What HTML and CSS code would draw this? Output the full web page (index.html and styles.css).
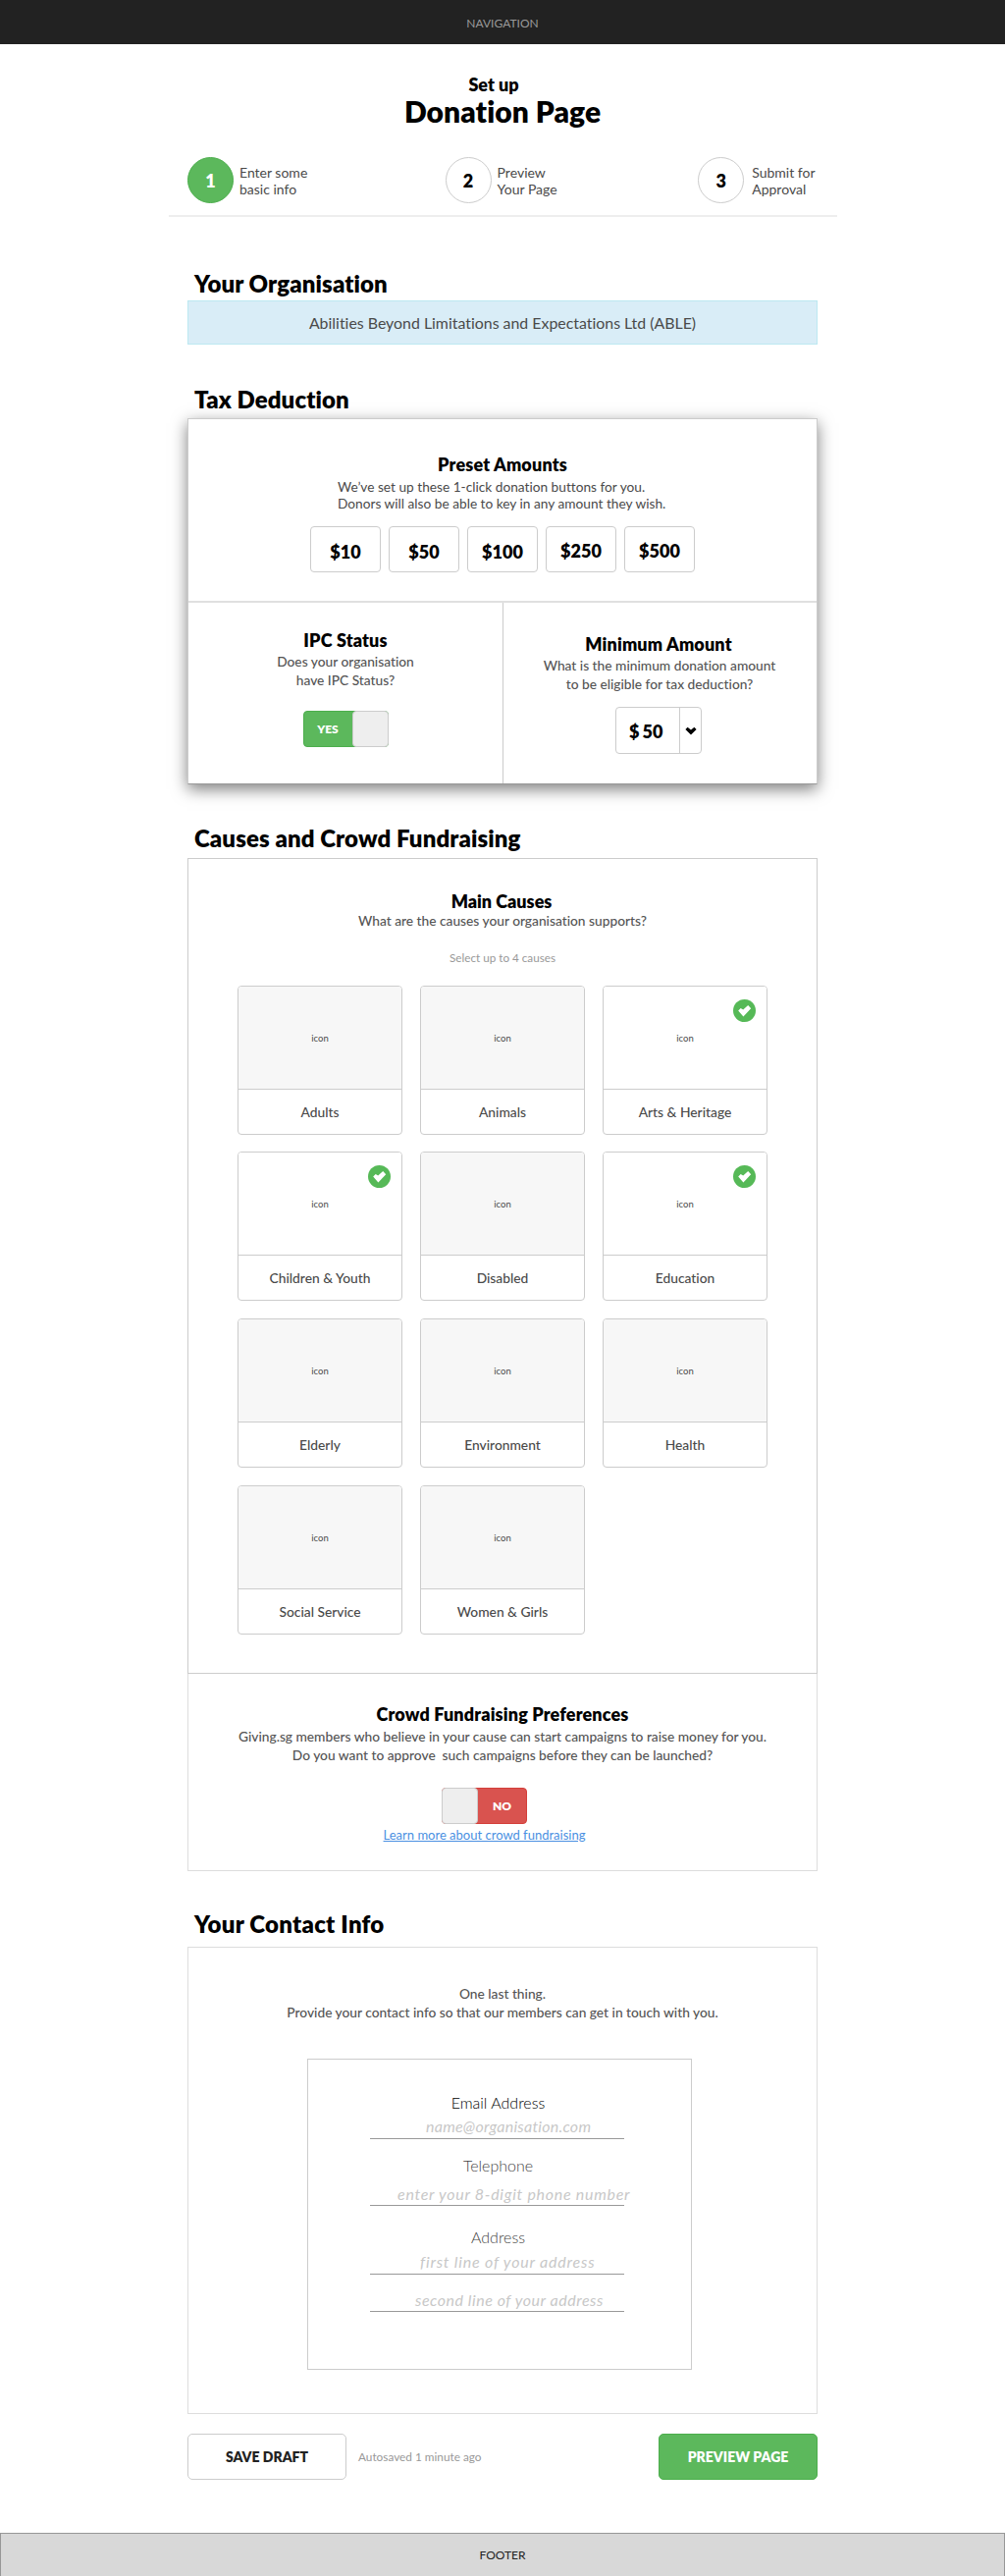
FILE: index.html
```
<!DOCTYPE html>
<html lang="en">
<head>
<meta charset="utf-8">
<title>Set up Donation Page</title>
<link rel="stylesheet" href="styles.css">
</head>
<body>
<svg class="sprite" width="0" height="0" aria-hidden="true">
  <symbol id="check" viewBox="0 0 23 23">
    <circle cx="11.5" cy="11.5" r="11.5" fill="#56b957"/>
    <path d="M5.2 11.6 7.7 9 10.2 10.6 15.2 6 18.2 9.2 10.4 17.4Z" fill="#fff"/>
  </symbol>
</svg>
<nav class="nav">NAVIGATION</nav>
<main class="page">
  <header class="title">
    <p class="title-small">Set up</p>
    <h1>Donation Page</h1>
  </header>
  <ol class="steps">
    <li class="step active"><span class="num">1</span><span>Enter some<br>basic info</span></li>
    <li class="step"><span class="num">2</span><span>Preview<br>Your Page</span></li>
    <li class="step last"><span class="num">3</span><span>Submit for<br>Approval</span></li>
  </ol>
  <hr class="rule">

  <h2 class="h-org">Your Organisation</h2>
  <div class="org">Abilities Beyond Limitations and Expectations Ltd (ABLE)</div>

  <h2 class="h-tax">Tax Deduction</h2>
  <section class="card tax">
    <div class="preset">
      <h3>Preset Amounts</h3>
      <p class="preset-text">We’ve set up these 1-click donation buttons for you.<br>Donors will also be able to key in any amount they wish.</p>
      <div class="amounts">
        <button>$10</button><button>$50</button><button>$100</button><button class="low">$250</button><button class="low">$500</button>
      </div>
    </div>
    <div class="halves">
      <div class="half ipc">
        <h3>IPC Status</h3>
        <p class="hint">Does your organisation<br>have IPC Status?</p>
        <div class="toggle yes"><span>YES</span><i></i></div>
      </div>
      <div class="half min">
        <h3>Minimum Amount</h3>
        <p class="hint">What is the minimum donation amount<br>to be eligible for tax deduction?</p>
        <div class="select"><span class="value"><b>$</b><b>50</b></span><span class="arrow"><svg width="12" height="9" viewBox="0 0 12 9"><path d="M0.4 3 2.6 0.7 6 3.4 9.4 0.7 11.6 3 6 8.4Z"/></svg></span></div>
      </div>
    </div>
  </section>

  <h2 class="h-causes">Causes and Crowd Fundraising</h2>
  <section class="card causes">
    <h3>Main Causes</h3>
    <p class="hint one">What are the causes your organisation supports?</p>
    <p class="limit">Select up to 4 causes</p>
    <div class="grid">
      <div class="cause"><div class="pic">icon</div><div class="name">Adults</div></div>
      <div class="cause"><div class="pic">icon</div><div class="name">Animals</div></div>
      <div class="cause on"><div class="pic">icon</div><div class="name">Arts &amp; Heritage</div><svg class="badge"><use href="#check"/></svg></div>
      <div class="cause on"><div class="pic">icon</div><div class="name">Children &amp; Youth</div><svg class="badge"><use href="#check"/></svg></div>
      <div class="cause"><div class="pic">icon</div><div class="name">Disabled</div></div>
      <div class="cause on"><div class="pic">icon</div><div class="name">Education</div><svg class="badge"><use href="#check"/></svg></div>
      <div class="cause"><div class="pic">icon</div><div class="name">Elderly</div></div>
      <div class="cause"><div class="pic">icon</div><div class="name">Environment</div></div>
      <div class="cause"><div class="pic">icon</div><div class="name">Health</div></div>
      <div class="cause"><div class="pic">icon</div><div class="name">Social Service</div></div>
      <div class="cause"><div class="pic">icon</div><div class="name">Women &amp; Girls</div></div>
    </div>
  </section>
  <section class="card crowd">
    <h3>Crowd Fundraising Preferences</h3>
    <p class="hint">Giving.sg members who believe in your cause can start campaigns to raise money for you.<br>Do you want to approve&nbsp; such campaigns before they can be launched?</p>
    <div class="prefs">
      <div class="toggle no"><i></i><span>NO</span></div>
      <a href="#">Learn more about crowd fundraising</a>
    </div>
  </section>

  <h2 class="h-contact">Your Contact Info</h2>
  <section class="card contact">
    <p class="hint">One last thing.<br>Provide your contact info so that our members can get in touch with you.</p>
    <div class="form">
      <label class="dark">Email Address</label>
      <div class="field email">name@organisation.com</div>
      <label class="l-tel">Telephone</label>
      <div class="field tel">enter your 8-digit phone number</div>
      <label class="l-addr">Address</label>
      <div class="field addr1">first line of your address</div>
      <div class="field addr2">second line of your address</div>
    </div>
  </section>

  <div class="actions">
    <button class="btn save">SAVE DRAFT</button>
    <span class="autosaved">Autosaved 1 minute ago</span>
    <button class="btn preview">PREVIEW PAGE</button>
  </div>
</main>
<footer class="footer">FOOTER</footer>
</body>
</html>
```
FILE: styles.css
```
* { box-sizing: border-box; }
body {
  margin: 0;
  background: #fff;
  color: #4a4a4a;
  font: 14px/19px Lato, "Liberation Sans", sans-serif;
  font-variant-ligatures: none;
}
h1, h2, h3, p, ol { margin: 0; padding: 0; }
h1, h2, h3 { color: #000; font-weight: 800; }
button { font-family: inherit; padding: 0; }
.sprite { position: absolute; }

.nav {
  height: 45px;
  padding-top: 16px;
  background: #222;
  color: #999;
  font-size: 12px;
  line-height: 15px;
  text-align: center;
}
.page { width: 642px; margin: 0 auto; }

.title { padding-top: 31px; text-align: center; color: #000; }
.title-small { font-size: 18px; line-height: 20px; font-weight: 800; padding-right: 18px; }
h1 { font-size: 30px; line-height: 34px; letter-spacing: 0.05px; }

.steps { display: flex; list-style: none; margin-top: 30px; }
.step { display: flex; width: 263px; line-height: 17px; gap: 6px; }
.step > span:last-child { padding-top: 7px; }
.step.last { width: 122px; margin-left: -5px; gap: 8px; white-space: nowrap; }
.num {
  width: 47px;
  height: 47px;
  border: 1px solid #ccc;
  border-radius: 50%;
  color: #000;
  font-size: 18px;
  font-weight: 800;
  line-height: 47px;
  text-align: center;
}
.active .num { background: #5cb85c; border-color: #4cae4c; color: #fff; }
.rule { width: 681px; height: 2px; margin: 12px 0 0 -19px; border: 0; background: #eee; }

h2 { font-size: 24px; line-height: 29px; padding-left: 7px; letter-spacing: 0.1px; }
.h-org { margin-top: 53px; }
.org {
  height: 45px;
  margin: 3px 0 0;
  padding-top: 12px;
  border: 1px solid #bce8f1;
  background: #d9edf7;
  font-size: 15.9px;
  line-height: 20px;
  text-align: center;
}

.card { border: 1px solid #ccc; background: #fff; text-align: center; }
h3 { font-size: 18px; line-height: 22px; letter-spacing: 0.15px; }
.hint { color: #555; font-size: 13.75px; font-weight: 500; margin-top: 2px; }

.h-tax { margin-top: 41px; }
.tax {
  height: 373px;
  margin-top: 5px;
  border-bottom-color: #999;
  box-shadow: 0 5px 15px rgba(0, 0, 0, 0.5);
}
.preset { height: 187px; padding-top: 35px; border-bottom: 2px solid #e0e0e0; }
.preset-text { width: 336px; margin: 3px auto 0; font-size: 13.7px; line-height: 17px; text-align: left; white-space: nowrap; }
.amounts { display: flex; justify-content: center; gap: 8px; margin-top: 15px; }
.amounts button {
  width: 72px;
  height: 47px;
  padding-top: 4px;
  border: 1px solid #ccc;
  border-radius: 4px;
  background: #fff;
  color: #000;
  font-size: 18px;
  font-weight: 800;
}
.amounts .low { padding-top: 2px; }
.halves { display: flex; height: 184px; }
.half { display: flex; flex-direction: column; align-items: center; }
.ipc { width: 321px; padding-top: 27px; border-right: 1px solid #ccc; }
.ipc .hint { margin-top: 1px; }
.min { width: 318px; padding-top: 31px; }
.min h3 { padding-right: 2px; }
.min .hint { margin-top: 1px; }

.toggle {
  display: flex;
  align-items: center;
  width: 87px;
  height: 37px;
  border: 1px solid;
  border-radius: 4px;
  color: #fff;
  font-size: 12px;
  font-weight: 800;
}
.toggle span { flex: 1; text-align: center; }
.toggle i { width: 37px; height: 37px; border: 1px solid #ccc; border-radius: 4px; background: #eee; }
.yes { margin-top: 22px; background: #5cb85c; border-color: #4cae4c; }
.yes i { margin-right: -1px; }
.no { background: #d9534f; border-color: #d43f3a; }
.no i { margin-left: -1px; }

.select { display: flex; width: 88px; height: 48px; margin: 14px 2px 0 0; border: 1px solid #ccc; border-radius: 4px; }
.value { display: flex; gap: 3px; flex: 1; padding: 15px 0 0 13px; color: #000; font-size: 18px; }
.value b { font-weight: 800; }
.arrow { display: flex; width: 22px; align-items: center; justify-content: center; border-left: 1px solid #ccc; }

.h-causes { margin-top: 40px; }
.causes { height: 831px; margin-top: 6px; padding-top: 32px; }
.causes h3 { padding-right: 2px; letter-spacing: 0; }
.hint.one { line-height: 17px; margin: 0; }
.limit { margin-top: 22px; color: #999; font-size: 11.7px; line-height: 15px; }
.grid {
  display: grid;
  grid-template-columns: repeat(3, 168px);
  grid-template-rows: 151px 152px 152px 152px;
  gap: 18px;
  justify-content: center;
  margin-top: 21px;
}
.cause { position: relative; height: 152px; border: 1px solid #ccc; border-radius: 4px; overflow: hidden; }
.pic { height: 105px; padding-top: 47px; border-bottom: 1px solid #ccc; background: #f7f7f7; font-size: 9.5px; line-height: 12px; }
.on .pic { background: #fff; }
.name { padding-top: 13px; font-size: 13.8px; font-weight: 500; }
.badge { position: absolute; top: 13px; right: 11px; width: 23px; height: 23px; }

.crowd { height: 201px; padding-top: 30px; border-color: #ddd; border-top: 0; }
.prefs { display: flex; flex-direction: column; align-items: center; width: 603px; margin-top: 24px; }
.prefs a { margin-top: 3px; color: #4a90e2; font-size: 13px; line-height: 16px; }

.h-contact { margin-top: 39px; letter-spacing: 0.25px; }
.contact { height: 476px; margin-top: 9px; padding-top: 37px; border-color: #ddd; }
.contact .hint { margin: 0; }
.form {
  display: flex;
  flex-direction: column;
  width: 392px;
  height: 317px;
  margin: 38px 0 0 121px;
  padding: 34px 68px 0 63px;
  border: 1px solid #ccc;
  font-size: 16px;
  line-height: 20px;
}
label { padding-left: 2px; color: #444; font-weight: 300; }
.dark { color: #000; }
.field {
  height: 27px;
  border-bottom: 1px solid #999;
  color: #c8c8c8;
  font-style: italic;
  text-align: left;
  white-space: nowrap;
}
.email { padding: 4px 0 0 57px; letter-spacing: 0.24px; }
.l-tel { margin-top: 17px; }
.tel { height: 31px; padding: 9px 0 0 28px; letter-spacing: 0.72px; }
.l-addr { margin-top: 22px; }
.addr1 { height: 28px; padding: 5px 0 0 51px; letter-spacing: 0.8px; }
.addr2 { height: 38px; padding: 16px 0 0 46px; letter-spacing: 0.53px; }

.actions { display: flex; align-items: center; margin-top: 20px; }
.btn { width: 162px; height: 47px; border: 1px solid #ccc; border-radius: 5px; background: #fff; color: #222; font-size: 14px; font-weight: 800; }
.autosaved { margin-left: 12px; color: #999; font-size: 11.8px; }
.preview { margin-left: auto; border-color: #4cae4c; background: #5cb85c; color: #fff; }

.footer {
  height: 44px;
  margin-top: 54px;
  padding-top: 14px;
  border: 1px solid #979797;
  border-bottom: 0;
  background: #d8d8d8;
  color: #222;
  font-size: 12px;
  line-height: 15px;
  text-align: center;
}
```
